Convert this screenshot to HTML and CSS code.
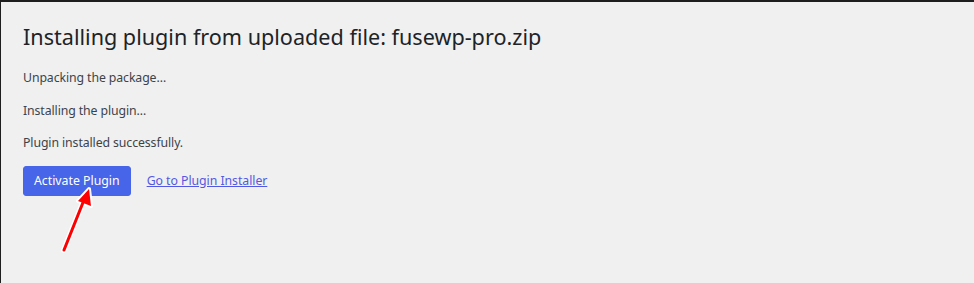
FILE: index.html
```html
<!DOCTYPE html>
<html lang="en">
<head>
    <meta charset="UTF-8">
    <meta name="viewport" content="width=device-width, initial-scale=1.0">
    <title>Install Plugin</title>
    <link rel="stylesheet" href="styles.css">
</head>
<body>
    <div class="frame">
        <div class="wrap">
            <h1>Installing plugin from uploaded file: fusewp-pro.zip</h1>

            <p>Unpacking the package…</p>
            <p>Installing the plugin…</p>
            <p>Plugin installed successfully.</p>

            <div class="actions">
                <a class="button" href="#">Activate Plugin</a>
                <a class="link" href="#">Go to Plugin Installer</a>
            </div>
        </div>

        <!-- pointer arrow drawn over the page -->
        <svg class="arrow" width="60" height="90" viewBox="0 0 60 90">
            <g stroke-linecap="round" stroke-linejoin="round">
                <line x1="13" y1="70" x2="33" y2="20" stroke="#fff" stroke-width="6"/>
                <polygon points="38,9 40,26 27,21" fill="#fff" stroke="#fff" stroke-width="4"/>
                <line x1="13" y1="70" x2="33" y2="20" stroke="#f00" stroke-width="3"/>
                <polygon points="38,9 40,26 27,21" fill="#f00"/>
            </g>
        </svg>
    </div>
</body>
</html>
```

FILE: styles.css
```css
*{
    margin: 0;
    padding: 0;
    box-sizing: border-box;
}

body{
    background-color: #1e1e1e;
    font-family: "Noto Sans", "Open Sans", sans-serif;
    color: #3c434a;
}

.frame{
    position: relative;
    height: 283px;
    margin-top: 2px;
    margin-left: 1px;
    background-color: #f0f0f1;
}

.wrap{
    padding: 0 20px 0 22px;
}

h1{
    font-size: 21.6px;
    font-weight: 400;
    color: #1d2327;
    line-height: 29px;
    padding-top: 20px;
    margin-bottom: 17px;
}

p{
    font-size: 12.3px;
    letter-spacing: -0.1px;
    line-height: 19px;
    margin-bottom: 13.5px;
}

.actions{
    display: flex;
    align-items: center;
    gap: 16px;
    margin-top: 7px;
}

.button{
    display: inline-block;
    background-color: #4765e8;
    color: #fff;
    font-size: 12.3px;
    line-height: 28px;
    height: 30px;
    padding: 0 10px;
    border: 1px solid #4765e8;
    border-radius: 3px;
    text-decoration: none;
}

.link{
    font-size: 12.3px;
    letter-spacing: -0.05px;
    color: #5358e3;
}

.arrow{
    position: absolute;
    left: 50px;
    top: 178px;
}
```
